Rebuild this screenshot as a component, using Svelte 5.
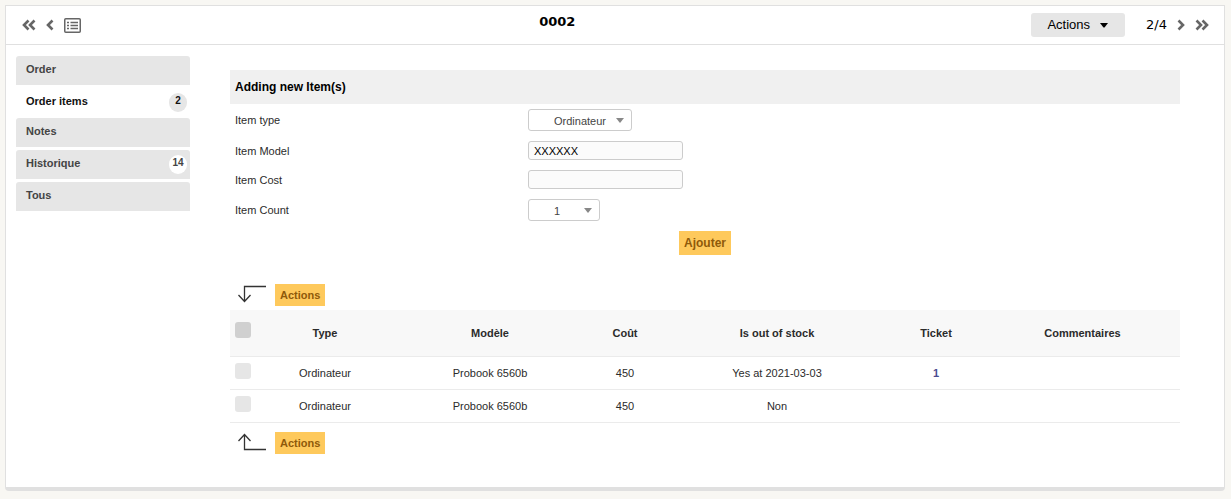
<script>
  const tabs = [
    { label: 'Order' },
    { label: 'Order items', count: 2, active: true },
    { label: 'Notes' },
    { label: 'Historique', count: 14 },
    { label: 'Tous' }
  ];

  const columns = ['Type', 'Modèle', 'Coût', 'Is out of stock', 'Ticket', 'Commentaires'];

  const rows = [
    { type: 'Ordinateur', model: 'Probook 6560b', cost: 450, stock: 'Yes at 2021-03-03', ticket: '1', comment: '' },
    { type: 'Ordinateur', model: 'Probook 6560b', cost: 450, stock: 'Non', ticket: '', comment: '' }
  ];

  let selected = $state([false, false]);
  let itemType = $state('Ordinateur');
  let itemModel = $state('XXXXXX');
  let itemCost = $state('');
  let itemCount = $state('1');

  function toggleAll(event) {
    selected = selected.map(() => event.currentTarget.checked);
  }
</script>

{#snippet chevrons(double, right)}
  <svg class:flip={right} width={double ? 14 : 8} height="12" viewBox={double ? '0 0 14 12' : '0 0 8 12'} aria-hidden="true">
    <path d="M6.5 1.5 2 6l4.500 4.500" />
    {#if double}<path d="M12.500 1.500 8 6l4.500 4.500" />{/if}
  </svg>
{/snippet}

<div class="card">
  <header class="bar">
    <nav class="nav" aria-label="Previous">
      <a href="#first" aria-label="First">{@render chevrons(true, false)}</a>
      <a href="#previous" aria-label="Previous">{@render chevrons(false, false)}</a>
      <a href="#list" aria-label="List">
        <svg class="list" width="17" height="15" viewBox="0 0 17 15" aria-hidden="true">
          <rect x="0.750" y="0.750" width="15.500" height="13.500" rx="1" />
          <path d="M3 4.500h2M3 7.500h2M3 10.500h2M6.500 4.500H14M6.500 7.500H14M6.500 10.500H14" />
        </svg>
      </a>
    </nav>
    <h1>0002</h1>
    <button class="menu" type="button">
      Actions
      <svg width="8" height="5" viewBox="0 0 8 5" aria-hidden="true"><path d="M0 0h8L4.500 4.500h-1z" /></svg>
    </button>
    <nav class="nav next" aria-label="Next">
      <span>2/4</span>
      <a href="#next" aria-label="Next">{@render chevrons(false, true)}</a>
      <a href="#last" aria-label="Last">{@render chevrons(true, true)}</a>
    </nav>
  </header>

  <div class="body">
    <nav class="tabs" aria-label="Sections">
      {#each tabs as tab}
        <a href="#tab" class:active={tab.active}>
          <span>{tab.label}</span>
          {#if tab.count}<span class="count">{tab.count}</span>{/if}
        </a>
      {/each}
    </nav>

    <main>
      <form onsubmit={(e) => e.preventDefault()}>
        <h2>Adding new Item(s)</h2>
        <div class="field">
          <label for="type">Item type</label>
          <span class="select wide">
            <select id="type" bind:value={itemType}><option>Ordinateur</option></select>
          </span>
        </div>
        <div class="field">
          <label for="model">Item Model</label>
          <input id="model" type="text" bind:value={itemModel} />
        </div>
        <div class="field">
          <label for="cost">Item Cost</label>
          <input id="cost" type="text" bind:value={itemCost} />
        </div>
        <div class="field">
          <label for="count">Item Count</label>
          <span class="select narrow">
            <select id="count" bind:value={itemCount}><option>1</option><option>2</option><option>3</option></select>
          </span>
        </div>
        <button class="primary submit" type="submit">Ajouter</button>
      </form>

      <div class="massive">
        <svg width="30" height="20" viewBox="0 0 30 20" aria-hidden="true">
          <path d="M29 1.500H7.500V16M1.500 10l6 6.500 6-6.500" />
        </svg>
        <button class="primary" type="button">Actions</button>
      </div>

      <table>
        <colgroup>
          <col class="c-check" /><col class="c-type" /><col class="c-model" /><col class="c-cost" />
          <col class="c-stock" /><col class="c-ticket" /><col class="c-comment" />
        </colgroup>
        <thead>
          <tr>
            <th class="check">
              <input type="checkbox" aria-label="Select all" checked={selected.every(Boolean)} onchange={toggleAll} />
            </th>
            {#each columns as column}<th scope="col">{column}</th>{/each}
          </tr>
        </thead>
        <tbody>
          {#each rows as row, i}
            <tr>
              <td class="check"><input type="checkbox" aria-label="Select row" bind:checked={selected[i]} /></td>
              <td>{row.type}</td>
              <td>{row.model}</td>
              <td>{row.cost}</td>
              <td>{row.stock}</td>
              <td>{#if row.ticket}<a href="#ticket">{row.ticket}</a>{/if}</td>
              <td>{row.comment}</td>
            </tr>
          {/each}
        </tbody>
      </table>

      <div class="massive below">
        <svg width="30" height="20" viewBox="0 0 30 20" aria-hidden="true">
          <path d="M29 16.500H7.500V2M1.500 8l6-6.500 6 6.500" />
        </svg>
        <button class="primary" type="button">Actions</button>
      </div>
    </main>
  </div>
</div>

<style>
  :global(body) {
    background: #f8f7f3;
    font: 11px/14px 'Liberation Sans', Arial, sans-serif;
    color: #2b2b2b;
  }
  .card {
    box-sizing: border-box;
    margin: 5px 6px 8px 5px;
    background: #fff;
    border: 1px solid #e0e0e0;
    border-bottom-width: 4px;
    border-radius: 0 0 4px 4px;
  }
  .bar {
    display: flex;
    align-items: center;
    height: 38px;
    padding: 0 15px 0 16px;
    border-bottom: 1px solid #e0e0e0;
  }
  .nav {
    display: flex;
    align-items: center;
    gap: 10px;
  }
  .nav a {
    display: flex;
  }
  .nav svg {
    fill: none;
    stroke: #666;
    stroke-width: 2.600;
  }
  .nav svg.list {
    stroke-width: 1.500;
  }
  .nav .flip {
    transform: scaleX(-1);
  }
  .next span {
    font: 13px/16px 'DejaVu Sans', Verdana, sans-serif;
    color: #000;
  }
  h1 {
    flex: 1;
    margin: 0;
    padding: 0 0 6px 2px;
    text-align: center;
    font: bold 13px/16px 'DejaVu Sans', Verdana, sans-serif;
    color: #000;
  }
  button {
    border: 0;
    font: inherit;
    cursor: pointer;
  }
  .menu {
    display: flex;
    align-items: center;
    gap: 10px;
    height: 24px;
    margin-right: 21px;
    padding: 0 17px 0 16px;
    border-radius: 3px;
    background: #e6e6e6;
    color: #000;
    font-size: 13px;
  }
  .body {
    display: flex;
    gap: 40px;
    padding: 11px 44px 33px 10px;
  }
  .tabs {
    display: flex;
    flex: 0 0 174px;
    flex-direction: column;
    gap: 3px;
  }
  .tabs a {
    display: flex;
    justify-content: space-between;
    box-sizing: border-box;
    height: 29px;
    padding: 5px 3px 0 10px;
    border-radius: 3px 3px 0 0;
    background: #e6e6e6;
    color: #444;
    font-weight: bold;
    line-height: 16px;
    text-decoration: none;
  }
  .tabs a.active {
    height: 27px;
    background: #fff;
    color: #111;
  }
  .tabs .count {
    width: 18px;
    height: 19px;
    border-radius: 10px;
    background: #fff;
    font-size: 10px;
    text-align: center;
  }
  .tabs .active .count {
    background: #e6e6e6;
  }
  main {
    flex: 1;
    min-width: 0;
    padding-top: 14px;
  }
  form {
    display: flex;
    flex-direction: column;
  }
  h2 {
    margin: 0;
    padding: 9px 5px;
    background: #f0f0f0;
    color: #000;
    font: bold 12px/16px 'Liberation Sans', Arial, sans-serif;
  }
  .field {
    display: grid;
    grid-template-columns: 298fr 652fr;
    align-items: center;
    padding: 5px 0;
  }
  .field label {
    padding-left: 5px;
  }
  .field input {
    box-sizing: border-box;
    width: 155px;
    height: 19px;
    padding: 0 5px;
    border: 1px solid #ccc;
    border-radius: 3px;
    background: #fbfbfb;
    color: #000;
    font: inherit;
  }
  .select {
    position: relative;
    display: flex;
  }
  .wide {
    width: 104px;
  }
  .narrow {
    width: 72px;
  }
  .select::after {
    content: '';
    position: absolute;
    top: 9px;
    right: 8px;
    border: 4px solid transparent;
    border-top: 5px solid #888;
    border-bottom: 0;
    pointer-events: none;
  }
  select {
    appearance: none;
    width: 100%;
    height: 22px;
    padding: 2px 0 0 25px;
    border: 1px solid #ccc;
    border-radius: 3px;
    background: #fff;
    color: #444;
    font: inherit;
  }
  .primary {
    height: 22px;
    padding: 0 5px;
    background: #fec95c;
    color: #8f5a0a;
    font-weight: bold;
  }
  .submit {
    align-self: center;
    height: 24px;
    margin-top: 5px;
    font-size: 12px;
  }
  .massive {
    display: flex;
    align-items: center;
    gap: 8px;
    padding: 29px 0 4px 7px;
  }
  .below {
    padding: 9px 0 0 7px;
  }
  .massive svg {
    fill: none;
    stroke: #333;
    stroke-width: 1.300;
  }
  table {
    width: 100%;
    table-layout: fixed;
    border-collapse: separate;
    border-spacing: 0;
  }
  .c-check {
    width: 23px;
  }
  .c-type {
    width: 144px;
  }
  .c-model {
    width: 186px;
  }
  .c-cost {
    width: 84px;
  }
  .c-stock {
    width: 220px;
  }
  .c-ticket {
    width: 98px;
  }
  .c-comment {
    width: 195px;
  }
  th,
  td {
    height: 32px;
    padding: 0;
    border-bottom: 1px solid #ebebeb;
    text-align: center;
  }
  th {
    height: 46px;
    background: #f8f8f8;
  }
  .check {
    padding-left: 5px;
    text-align: left;
  }
  .check input {
    appearance: none;
    display: block;
    width: 16px;
    height: 16px;
    margin: 0 0 4px;
    border-radius: 3px;
    background: #e6e6e6;
  }
  th.check input {
    margin-bottom: 6px;
    background: #d0d0d0;
  }
  .check input:checked {
    background: #888;
  }
  td a {
    color: #4b4b8f;
    font-weight: bold;
    text-decoration: none;
  }
</style>
